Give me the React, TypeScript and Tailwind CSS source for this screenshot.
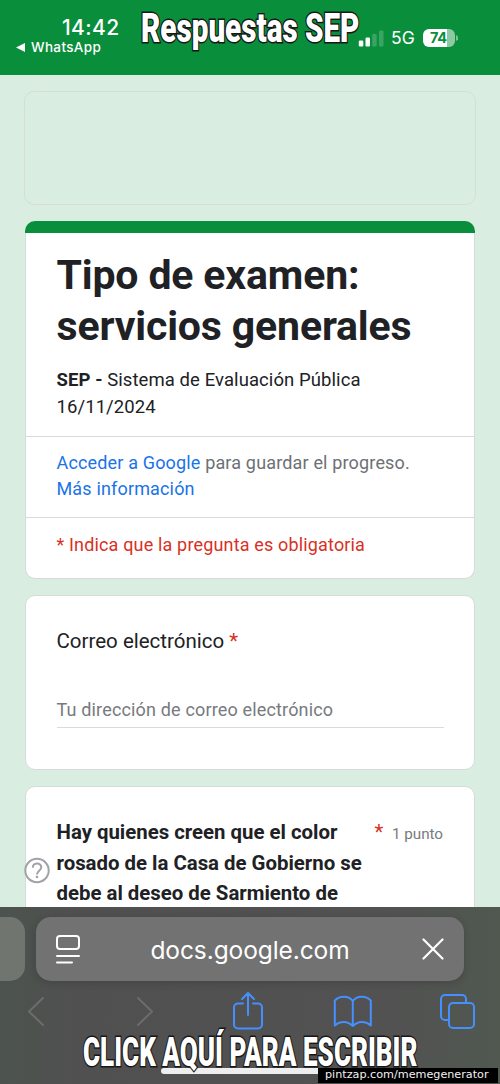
import React from 'react';

function StatusBar() {
  return (
    <header className="relative h-[75px] shrink-0 bg-[#098e3b] text-white font-['Inter',sans-serif]">
      <div className="flex items-start justify-between pl-4 pr-[42px]">
        <div className="w-[110px] pt-4">
          <div className="pl-[46px] text-[21px] leading-6 font-medium tracking-[0.4px] whitespace-nowrap">14:42</div>
          <div className="flex items-center gap-[6px] text-[13.5px] leading-[14px] font-medium tracking-[0.35px] whitespace-nowrap">
            <svg width="9" height="9" viewBox="0 0 9 9" fill="white"><path d="M0 4.5 9 0v9z" /></svg>
            <span>WhatsApp</span>
          </div>
        </div>
        <div className="flex items-center pt-7">
          <svg width="26" height="17" viewBox="0 0 26 17" fill="white">
            <rect x="0.8" y="10.5" width="4.5" height="6" rx="1.2" />
            <rect x="7.5" y="7.5" width="4.5" height="9" rx="1.2" />
            <rect x="14.2" y="4" width="4.5" height="12.5" rx="1.2" opacity=".2" />
            <rect x="21" y="0.5" width="4.5" height="16" rx="1.2" opacity=".2" />
          </svg>
          <span className="ml-[7px] w-6 text-[17.5px] leading-5 whitespace-nowrap">5G</span>
          <div className="ml-[8px] flex h-[18px] w-[32px] items-center overflow-hidden rounded-[6px] bg-[linear-gradient(90deg,#fff_74%,#8dc9a3_74%)] pl-[7px] text-[14.5px] font-bold tracking-[-0.3px] text-[#098e3b]">74</div>
          <svg className="ml-px" width="2" height="6" viewBox="0 0 2 6"><path d="M0 0c3 1 3 5 0 6z" fill="#7bc193" /></svg>
        </div>
      </div>
      <Caption className="left-[141px] top-[7px] w-[218px]" text="Respuestas SEP" scale="scale-x-[0.723]" />
    </header>
  );
}

function Caption({ className, text, scale }: { className: string; text: string; scale: string }) {
  return (
    <div className={`absolute ${className}`}>
      <span className={`inline-block origin-left whitespace-nowrap font-['Roboto',sans-serif] text-[41px] leading-[42px] font-black text-white [-webkit-text-stroke:3px_#171717] [paint-order:stroke_fill] ${scale}`}>
        {text}
      </span>
    </div>
  );
}

function IntroCard() {
  return (
    <section className="h-[358px] shrink-0">
      <div className="h-[12px] rounded-t-[10px] bg-[#098e3b]" />
      <div className="h-[346px] rounded-b-[10px] border border-t-0 border-[#d5dbdc] bg-white">
        <div className="h-[203px] pl-[30.5px] pt-[17px]">
          <h1 className="text-[41px] leading-[51px] font-bold tracking-[-0.15px] whitespace-nowrap">Tipo de examen:<br />servicios generales</h1>
          <p className="mt-[15px] text-[18.5px] leading-[27px] tracking-[0.08px]"><b>SEP - </b>Sistema de Evaluación Pública<br />16/11/2024</p>
        </div>
        <div className="h-[81px] border-t border-[#d9dadd] pl-[30.5px] pt-[13px] text-[18px] leading-[25.5px] tracking-[0.16px] text-[#6d7074]">
          <span className="text-[#1a73e8]">Acceder a Google</span> para guardar el progreso.<br /><span className="text-[#1a73e8]">Más información</span>
        </div>
        <div className="border-t border-[#d9dadd] pl-[30.5px] pt-[13px] text-[18px] leading-[27px] tracking-[0.16px] text-[#d93025]">* Indica que la pregunta es obligatoria</div>
      </div>
    </section>
  );
}

function BrowserBar() {
  return (
    <footer className="relative h-[177px] shrink-0 bg-[linear-gradient(90deg,#4c534e_0%,#505050_16%,#525252_78%,#505850_100%)] font-['Inter',sans-serif] text-white">
      <div className="flex gap-[11px] pt-[10px]">
        <div className="h-16 w-[25px] rounded-r-[15px] bg-[#707570]" />
        <div className="flex h-16 w-[428px] items-center rounded-[15px] bg-[#727272] pl-5 pr-5 shadow-[0_2px_9px_rgba(0,0,0,0.16)]">
          <svg width="24" height="30" viewBox="0 0 24 30" fill="none" stroke="white" strokeWidth="2" strokeLinecap="round">
            <rect x="1" y="2" width="22" height="13" rx="3" /><path d="M1 22h22M1 28.5h15" />
          </svg>
          <div className="flex-1 pr-[2px] pt-px text-center text-[24.5px] leading-8 tracking-[-0.1px] whitespace-nowrap">docs.google.com</div>
          <svg width="22" height="22" viewBox="0 0 22 22" fill="none" stroke="white" strokeWidth="2.2" strokeLinecap="round"><path d="m1.5 1.5 19 19m0-19-19 19" /></svg>
        </div>
      </div>
      <svg className="block" width="500" height="60" viewBox="0 981 500 60" fill="none" stroke="#458fff" strokeWidth="2" strokeLinecap="round" strokeLinejoin="round">
        <path d="m43 998-14 13.5L43 1025M138 998l14 13.5-14 13.5" stroke="#6c6c6c" />
        <path d="M243 1003.5h-5a4 4 0 0 0-4 4v17a4 4 0 0 0 4 4h20a4 4 0 0 0 4-4v-17a4 4 0 0 0-4-4h-5M248 1015v-22m-6 6 6-6 6 6" />
        <path d="M352.8 1001c-4-5.5-13-5.5-18-.5v25c5.5-5 13-4.5 18 .5 5-5 12.5-5.5 18-.5v-25c-5-5-14-5-18 .5v25" />
        <path d="M448 1020h-3a4 4 0 0 1-4-4v-17a4 4 0 0 1 4-4h17a4 4 0 0 1 4 4v3" /><rect x="449" y="1003" width="25" height="25" rx="4" />
      </svg>
      <div className="absolute left-[161px] top-[168px] h-[6px] w-[178px] rounded-full bg-[#eeeeee] -translate-y-[7px]" />
      <Caption className="left-[83px] top-[124px]" text="CLICK AQUÍ PARA ESCRIBIR" scale="scale-x-[0.635]" />
      <div className="absolute left-[318px] top-[161px] flex h-[15px] w-[180px] items-center bg-black pl-[7px] font-['DejaVu_Sans',sans-serif] text-[11.2px] font-medium whitespace-nowrap text-[#f2f2f2]">pintzap.com/memegenerator</div>
    </footer>
  );
}

export default function App() {
  return (
    <div className="flex h-[1084px] w-[500px] flex-col overflow-hidden bg-[#daede1] font-['Roboto',sans-serif] text-[#202124]">
      <StatusBar />
      <main className="relative flex h-[832px] shrink-0 flex-col overflow-hidden px-[25px] pt-[16px]">
        <section className="-mx-px h-[114px] shrink-0 rounded-[10px] border border-[#d7dcdd]" />
        <div className="h-[16px] shrink-0" />
        <IntroCard />
        <section className="mt-[16px] h-[175px] shrink-0 rounded-[10px] border border-[#d5dbdc] bg-white px-[30.5px] pt-[30px]">
          <h2 className="text-[20.5px] leading-[31px]">Correo electrónico <span className="text-[#d93025]">*</span></h2>
          <div className="mt-[36px] h-[35px] border-b border-[#d9dadd] pt-[3px] text-[18px] leading-[27px] tracking-[0.16px] text-[#777a7e]">Tu dirección de correo electrónico</div>
        </section>
        <section className="mt-[16px] flex h-[160px] shrink-0 rounded-t-[10px] border border-[#d5dbdc] bg-white pl-[30.5px] pr-[31px] pt-[30px]">
          <h2 className="w-[318px] text-[20.4px] leading-[30.5px] font-bold tracking-[-0.01px] whitespace-nowrap">Hay quienes creen que el color<br />rosado de la Casa de Gobierno se<br />debe al deseo de Sarmiento de</h2>
          <span className="text-[20.5px] leading-[30px] text-[#d93025]">*</span>
          <span className="ml-auto pt-[5px] text-[15.2px] leading-[24px] text-[#777a7e] whitespace-nowrap">1 punto</span>
        </section>
        <svg className="absolute left-[24px] top-[782px]" width="26" height="27" viewBox="0 0 26 27" fill="none" stroke="#a2a1a8" strokeWidth="2"><circle cx="13" cy="13.5" r="11.7" /><path d="M8.8 10.8c0-5.6 8.5-5.6 8.5-.5 0 3.5-4.3 3.4-4.3 7.2" /><path d="M13 18.8v2.3" strokeWidth="2.3" /></svg>
      </main>
      <BrowserBar />
    </div>
  );
}
